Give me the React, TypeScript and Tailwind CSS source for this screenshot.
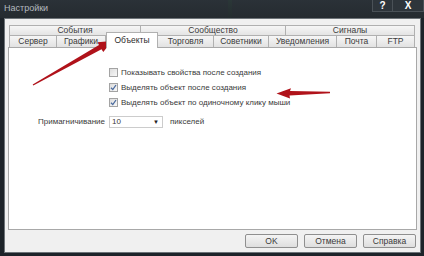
import React from "react";

const row1 = [
  { label: "События", w: "w-[132px]" },
  { label: "Сообщество", w: "w-[145px]" },
  { label: "Сигналы", w: "w-[129px]" },
];

const row2 = [
  { label: "Сервер", w: "w-[48px]" },
  { label: "Графики", w: "w-[49px]" },
  { label: "Объекты", w: "w-[52px]", active: true },
  { label: "Торговля", w: "w-[56px]" },
  { label: "Советники", w: "w-[55px]" },
  { label: "Уведомления", w: "w-[68px]" },
  { label: "Почта", w: "w-[40px]" },
  { label: "FTP", w: "w-[38px]" },
];

function Checkbox({ checked }: { checked?: boolean }) {
  return (
    <span className="flex h-[9px] w-[9px] items-center justify-center border border-[#a3a3a3] bg-gradient-to-br from-[#dcdcdc] to-[#f8f8f8]">
      {checked && (
        <svg width="7" height="7" viewBox="0 0 7 7">
          <path d="M1 3.8 L2.8 5.6 L6 1" fill="none" stroke="#4a6a9e" strokeWidth="1.3" />
        </svg>
      )}
    </span>
  );
}

function Button({ children }: { children: React.ReactNode }) {
  return (
    <div className="flex h-[14px] w-[53px] items-center justify-center rounded-[2px] border border-[#8f8f8f] bg-gradient-to-b from-[#f4f4f4] to-[#dedede] text-[8.5px] text-[#3a3a3a]">
      {children}
    </div>
  );
}

export default function App() {
  return (
    <div className="relative h-[256px] w-[424px] overflow-hidden bg-[#1d2329] font-['Liberation_Sans',sans-serif]">
      {/* glow in the background behind the title bar */}
      <div className="absolute left-[228px] top-0 h-[18px] w-[4px] bg-gradient-to-b from-[#1f6b2e] to-[#13301c] opacity-80" />

      {/* TITLE BAR */}
      <div className="relative flex h-[18px] items-start justify-between bg-gradient-to-b from-[#2c3339]/90 to-[#262c31]/90">
        <span className="pl-[4px] pt-[4px] text-[9px] leading-none text-[#b4babf]">
          Настройки
        </span>
        <div className="flex h-[12px]">
          <div className="flex w-[21px] items-center justify-center border border-t-0 border-[#4a5157] bg-[#2e353b] text-[10px] font-bold leading-none text-white">
            ?
          </div>
          <div className="flex w-[31px] items-center justify-center border border-t-0 border-l-0 border-[#4a5157] bg-[#2e353b] text-[10px] font-bold leading-none text-white">
            X
          </div>
        </div>
      </div>

      {/* BODY */}
      <div className="mx-[3px] ml-[4px] flex h-[235px] flex-col border border-[#6d7378] bg-[#f0f0f0] pt-[6px]">
        {/* TABS */}
        <div className="ml-[4px] flex h-[10px] w-[406px]">
          {row1.map((t, i) => (
            <div
              key={t.label}
              className={`${t.w} flex items-center justify-center border-t border-r border-[#b0b0b0] bg-gradient-to-b from-[#f6f6f6] to-[#e4e4e4] text-[8.5px] leading-none text-[#3a3a3a] ${i === 0 ? "border-l" : ""}`}
            >
              {t.label}
            </div>
          ))}
        </div>
        <div className="ml-[4px] flex h-[12px] w-[406px] items-end">
          {row2.map((t, i) =>
            t.active ? (
              <div
                key={t.label}
                className={`${t.w} relative z-10 -mb-[1px] flex h-[16px] items-center justify-center border-x border-t border-[#b0b0b0] bg-white pb-[1px] text-[8.5px] leading-none text-[#2a2a2a]`}
              >
                {t.label}
              </div>
            ) : (
              <div
                key={t.label}
                className={`${t.w} flex h-[12px] items-center justify-center border-t border-r border-[#b0b0b0] bg-gradient-to-b from-[#f6f6f6] to-[#e2e2e2] text-[8.5px] leading-none text-[#3a3a3a] ${i === 0 ? "border-l" : ""}`}
              >
                {t.label}
              </div>
            )
          )}
        </div>

        {/* CONTENT PANEL */}
        <div className="ml-[3px] flex h-[183px] w-[409px] flex-col border border-[#a8a8a8] bg-white pl-[100px] pt-[17px] text-[8px] text-[#3a3a3a]">
          <div className="flex h-[15px] items-center gap-[3px]">
            <Checkbox />
            <span>Показывать свойства после создания</span>
          </div>
          <div className="flex h-[15px] items-center gap-[3px]">
            <Checkbox checked />
            <span>Выделять объект после создания</span>
          </div>
          <div className="flex h-[15px] items-center gap-[3px]">
            <Checkbox checked />
            <span>Выделять объект по одиночному клику мыши</span>
          </div>
          <div className="-ml-[71px] mt-[6px] flex h-[12px] items-center">
            <span className="w-[71px]">Примагничивание</span>
            <div className="flex h-[12px] w-[54px] items-center justify-between border border-[#cccccc] bg-white pl-[2px] pr-[3px]">
              <span>10</span>
              <span className="text-[6px] text-[#222]">▼</span>
            </div>
            <span className="ml-[7px]">пикселей</span>
          </div>
        </div>

        {/* BUTTONS */}
        <div className="mt-[4px] flex justify-end gap-[6px] pr-[4px]">
          <Button>OK</Button>
          <Button>Отмена</Button>
          <Button>Справка</Button>
        </div>
      </div>

      {/* ANNOTATION ARROWS */}
      <svg className="pointer-events-none absolute inset-0" width="424" height="256" viewBox="0 0 424 256">
        <polygon
          points="33.3,85.6 101.5,49.2 103.3,52 112,41 97.6,42.2 99,45 32.7,84.4"
          fill="#b0121a"
        />
        <polygon
          points="330,91.8 290,91 291,88.3 276.5,93.6 290,98.6 289.5,95.6 330,93.2"
          fill="#b0121a"
        />
      </svg>
    </div>
  );
}
